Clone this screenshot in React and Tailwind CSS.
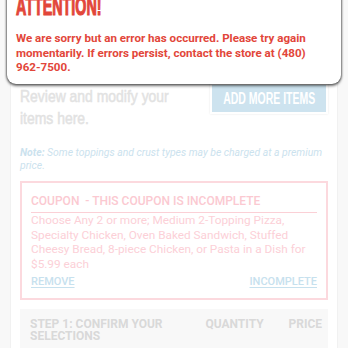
import React from "react";

const narrow = { fontFamily: '"Liberation Sans", Arial, sans-serif' };

// --- Xato oynasi ---
const ErrorModal = () => (
  <div className="absolute left-[7px] right-[7px] top-[-12px] bg-white rounded-b-[9px] shadow-[0_2px_3px_rgba(0,0,0,0.55),-1px_0_2px_rgba(0,0,0,0.35),1px_0_2px_rgba(0,0,0,0.35)] px-[9px] pt-[6px] pb-[9px]">
    <div className="absolute right-[10px] top-[-9px] w-[18px] h-[18px] border-2 border-[#2f86c2] rounded-[3px] flex items-center justify-center">
      <svg width="10" height="10" viewBox="0 0 10 10">
        <path d="M1.5 1.5 L8.5 8.5 M8.5 1.5 L1.5 8.5" stroke="#2f86c2" strokeWidth="2.4" strokeLinecap="round" />
      </svg>
    </div>
    <h2
      className="text-[26px] leading-[25px] font-bold text-[#e2463a] uppercase origin-left [transform:scaleX(0.55)] whitespace-nowrap [-webkit-text-stroke:1.2px_#e2463a]"
      style={narrow}
    >
      ATTENTION!
    </h2>
    <p className="mt-[12px] text-[11.6px] leading-[14.5px] font-bold text-[#e2463a]">
      We are sorry but an error has occurred. Please try again momentarily. If errors persist, contact the store at (480) 962-7500.
    </p>
  </div>
);

// --- Kupon kartochkasi ---
const CouponCard = () => (
  <div className="mt-[9px] border-2 border-[#fcd9de] px-[9px] pt-[10px] pb-[9px]">
    <div className="text-[12px] leading-[16px] font-medium text-[#fbc9d1] uppercase">
      COUPON &nbsp;- THIS COUPON IS INCOMPLETE
    </div>
    <div className="mt-[3px] border-t-[1.5px] border-[#fbd0d6]" />
    <p className="mt-0 text-[11.8px] leading-[14.6px] text-[#fcd0d7]">
      Choose Any 2 or more; Medium 2-Topping Pizza, Specialty Chicken, Oven Baked Sandwich, Stuffed Cheesy Bread, 8-piece Chicken, or Pasta in a Dish for $5.99 each
    </p>
    <div className="mt-[4px] flex justify-between text-[11px] leading-[14px] font-medium text-[#c7e1ee] uppercase">
      <span className="underline underline-offset-2">REMOVE</span>
      <span className="underline underline-offset-2">INCOMPLETE</span>
    </div>
  </div>
);

export default function App() {
  return (
    <div className="relative w-full h-[348px] overflow-hidden bg-[#f8f8f8]" style={{ fontFamily: "Roboto, sans-serif" }}>
      <div className="mx-[10px] h-[74px]" />
      <div className="mx-[10px] bg-white border border-[#f1f1f1] px-[9px] pt-[11px] pb-[20px]">
        <div className="flex justify-between items-start">
          <h1 className="w-[180px] text-[17px] leading-[22px] text-[#e2e2e2]" style={narrow}>
            <span className="block origin-left [transform:scaleX(0.82)] whitespace-nowrap [-webkit-text-stroke:0.5px_#e2e2e2]">Review and modify your</span>
            <span className="block origin-left [transform:scaleX(0.82)] whitespace-nowrap [-webkit-text-stroke:0.5px_#e2e2e2]">items here.</span>
          </h1>
          <button className="mt-[-3px] w-[118px] h-[31px] border-2 border-white shadow-[0_0_2px_rgba(0,0,0,0.1)] bg-[#cde3ef] flex items-center justify-center overflow-visible">
            <span className="shrink-0 text-[16px] font-bold text-white [transform:scaleX(0.655)] whitespace-nowrap" style={narrow}>
              ADD MORE ITEMS
            </span>
          </button>
        </div>
        <p className="mt-[16px] text-[10.4px] leading-[13px] italic text-[#cbe2ee]">
          <b>Note:</b> Some toppings and crust types may be charged at a premium price.
        </p>
        <CouponCard />
        <div className="mt-[9px] bg-[#f8f8f8] pl-[10px] pr-[6px] pt-[10px] pb-[12px] flex text-[12px] leading-[11.5px] font-bold text-[#d9d9d9] uppercase">
          <div className="flex-1 pr-[30px]">STEP 1: CONFIRM YOUR SELECTIONS</div>
          <div className="w-[83px]">QUANTITY</div>
          <div>PRICE</div>
        </div>
      </div>
      <ErrorModal />
    </div>
  );
}
